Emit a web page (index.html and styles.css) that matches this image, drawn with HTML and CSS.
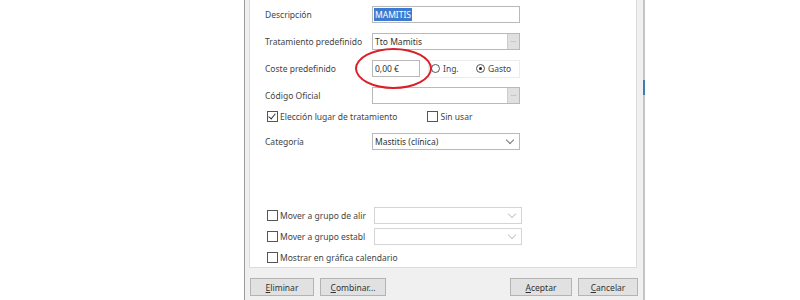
FILE: index.html
```html
<!DOCTYPE html>
<html lang="es">
<head>
  <meta charset="UTF-8">
  <meta name="viewport" content="width=device-width, initial-scale=1.0">
  <title>Tratamiento</title>
  <link rel="stylesheet" href="styles.css">
</head>
<body>
  <div class="dialog">
    <div class="panel">
      <!-- Datos principales -->
      <div class="row">
        <span class="lbl">Descripción</span>
        <div class="field wide"><span class="selected">MAMITIS</span></div>
      </div>
      <div class="row">
        <span class="lbl">Tratamiento predefinido</span>
        <div class="field wide"><span class="value">Tto Mamitis</span><span class="dots">...</span></div>
      </div>
      <div class="row coste">
        <span class="lbl">Coste predefinido</span>
        <div class="field short"><span class="value">0,00 €</span></div>
        <div class="radio-group">
          <span class="radio"></span><span class="opt ing">Ing.</span>
          <span class="radio on"></span><span class="opt">Gasto</span>
        </div>
        <span class="mark"></span>
      </div>
      <div class="row">
        <span class="lbl">Código Oficial</span>
        <div class="field wide"><span class="value"></span><span class="dots">...</span></div>
      </div>
      <div class="check-row">
        <span class="check on"></span><span class="opt">Elección lugar de tratamiento</span>
        <span class="check sin"></span><span class="opt">Sin usar</span>
      </div>
      <div class="row categoria">
        <span class="lbl">Categoría</span>
        <div class="field wide combo"><span class="value">Mastitis (clínica)</span><span class="chev"></span></div>
      </div>

      <!-- Opciones -->
      <div class="row mover">
        <span class="check"></span><span class="opt cut">Mover a grupo de alir</span>
        <div class="field wide combo faded"><span class="value"></span><span class="chev"></span></div>
      </div>
      <div class="row mover second">
        <span class="check"></span><span class="opt cut">Mover a grupo establ</span>
        <div class="field wide combo faded"><span class="value"></span><span class="chev"></span></div>
      </div>
      <div class="check-row last">
        <span class="check"></span><span class="opt">Mostrar en gráfica calendario</span>
      </div>
    </div>

    <div class="footer">
      <button class="btn eliminar"><u>E</u>liminar</button>
      <button class="btn combinar"><u>C</u>ombinar...</button>
      <button class="btn aceptar"><u>A</u>ceptar</button>
      <button class="btn cancelar"><u>C</u>ancelar</button>
    </div>
  </div>
</body>
</html>
```

FILE: styles.css
```css
body {
  margin: 0;
  background-color: #ffffff;
  font-family: "Noto Sans", "Open Sans", sans-serif;
  font-size: 8.5px;
  color: #444444;
  overflow: hidden;
}
.dialog {
  position: relative;
  width: 394px;
  height: 300px;
  margin-left: 244px;
  padding-left: 4px;
  background-color: #f0f0f0;
  border-left: 1px solid #9a9a9a;
  border-right: 2px solid #c4c4c4;
}
/* blue accent on the window edge */
.dialog::after {
  content: "";
  position: absolute;
  right: -2px;
  top: 80px;
  width: 2px;
  height: 15px;
  background-color: #3a7fb0;
}
.panel {
  position: relative;
  width: 371px;
  height: 261px;
  padding: 6px 0 0 15px;
  background-color: #ffffff;
  border: 1px solid #dcdcdc;
  border-top: none;
}
.row {
  display: flex;
  align-items: center;
  height: 17px;
  margin-bottom: 10px;
}
.lbl {
  width: 107px;
  flex-shrink: 0;
}
.field {
  display: flex;
  align-items: center;
  height: 15px;
  border: 1px solid #b9b9b9;
  background-color: #ffffff;
}
.field.wide {
  width: 146px;
}
.field.short {
  width: 46px;
}
.value {
  flex: 1;
  padding-left: 2px;
  color: #333333;
}
.selected {
  margin-left: 1px;
  padding: 0 1px;
  background-color: #3d7bd1;
  color: #ffffff;
  line-height: 13px;
}
.dots {
  width: 11px;
  height: 15px;
  background-color: #e0e0e0;
  border-left: 1px solid #cccccc;
  color: #aaaaaa;
  text-align: center;
  line-height: 12px;
  font-size: 7px;
}
.coste {
  position: relative;
}
.radio-group {
  display: flex;
  align-items: center;
  width: 90px;
  height: 16px;
  margin-left: 8px;
  border: 1px solid #ececec;
}
.radio {
  position: relative;
  width: 7px;
  height: 7px;
  margin: 0 3px 0 2px;
  border: 1px solid #555555;
  border-radius: 50%;
  background-color: #ffffff;
}
.radio.on::after {
  content: "";
  position: absolute;
  left: 2px;
  top: 2px;
  width: 3px;
  height: 3px;
  border-radius: 50%;
  background-color: #222222;
}
.opt.ing {
  width: 31px;
}
.mark {
  position: absolute;
  left: 90px;
  top: -12px;
  width: 73px;
  height: 37px;
  border: 2px solid #d8202a;
  border-radius: 50%;
}
.check-row {
  display: flex;
  align-items: center;
  height: 12px;
  margin-top: -4px;
  padding-left: 2px;
}
.check {
  position: relative;
  width: 9px;
  height: 9px;
  margin-right: 2px;
  border: 1px solid #555555;
  background-color: #ffffff;
  flex-shrink: 0;
}
.check.on::after {
  content: "";
  position: absolute;
  left: 2px;
  top: 0;
  width: 3px;
  height: 6px;
  border-right: 1px solid #333333;
  border-bottom: 1px solid #333333;
  transform: rotate(40deg);
}
.check.sin {
  margin-left: 30px;
}
.categoria {
  margin-top: 11px;
}
.chev {
  width: 5px;
  height: 5px;
  margin: 0 6px 3px 0;
  border-right: 1px solid #777777;
  border-bottom: 1px solid #777777;
  transform: rotate(45deg);
}
.faded {
  border-color: #d4d4d4;
}
.faded .chev {
  border-color: #c8c8c8;
}
.mover {
  margin-top: 57px;
  margin-bottom: 4px;
  padding-left: 2px;
}
.mover .opt.cut {
  width: 94px;
  overflow: hidden;
  white-space: nowrap;
}
.mover.second {
  margin-top: 0;
  margin-bottom: 0;
}
.check-row.last {
  margin-top: 6px;
}
.footer {
  display: flex;
  align-items: flex-start;
  padding-top: 10px;
}
.btn {
  height: 18px;
  padding: 0;
  font-family: inherit;
  font-size: 8.5px;
  color: #333333;
  background-color: #e1e1e1;
  border: 1px solid #b4b4b4;
}
.eliminar {
  width: 64px;
  margin-left: 1px;
}
.combinar {
  width: 66px;
  margin-left: 6px;
}
.aceptar {
  width: 62px;
  margin-left: auto;
}
.cancelar {
  width: 60px;
  margin-left: 6px;
  margin-right: 5px;
}
```
